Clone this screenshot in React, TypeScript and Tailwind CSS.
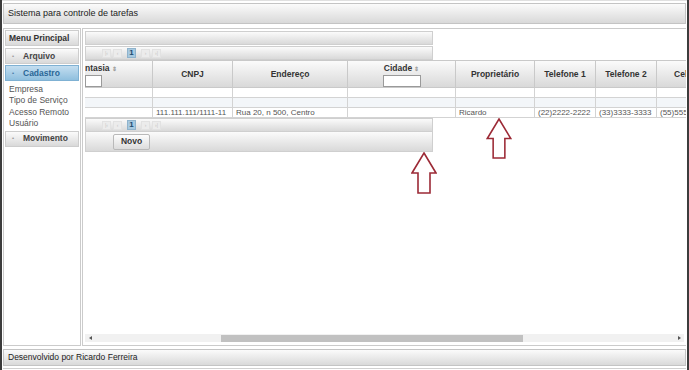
import React from "react";

const grad = "bg-linear-to-b from-[#fbfbfb] to-[#d9d9d9]";

function PagBtn({ children }: { children?: React.ReactNode }) {
  return (
    <div className="w-[9px] h-[9px] border border-[#e2e2e2] bg-[#ececec] flex items-center justify-center text-[5px] leading-none text-[#c4c4c4]">
      {children}
    </div>
  );
}

function Paginator() {
  return (
    <div className={`w-[348px] h-[14px] border border-[#cfcfcf] ${grad} flex items-center pl-[16px] gap-[2px]`}>
      <PagBtn>|‹</PagBtn>
      <PagBtn>‹</PagBtn>
      <div className="mx-[3px] w-[9px] h-[10px] border border-[#8fb3cc] bg-[#a7c9e0] flex items-center justify-center text-[8px] font-bold leading-none text-[#1e4a6e]">1</div>
      <PagBtn>›</PagBtn>
      <PagBtn>›|</PagBtn>
    </div>
  );
}

function Sort() {
  return <span className="text-[6px] text-[#999] ml-[2px] align-middle">⇕</span>;
}

const cols = [
  { w: "w-[68px]", label: "ntasia", sort: true, input: true, align: "left" },
  { w: "w-[80px]", label: "CNPJ" },
  { w: "w-[115px]", label: "Endereço" },
  { w: "w-[108px]", label: "Cidade", sort: true, input: true, align: "center" },
  { w: "w-[79px]", label: "Proprietário" },
  { w: "w-[61px]", label: "Telefone 1" },
  { w: "w-[61px]", label: "Telefone 2" },
  { w: "w-[64px]", label: "Celular" },
];

const data = ["", "111.111.111/1111-11", "Rua 20, n 500, Centro", "", "Ricardo", "(22)2222-2222", "(33)3333-3333", "(55)5555-5555"];

function HeaderCell({ c }: { c: (typeof cols)[number] }) {
  if (c.input) {
    return (
      <div className={`${c.w} shrink-0 h-full border-r border-[#c9c9c9] flex flex-col ${c.align === "left" ? "items-start" : "items-center"} pt-[2px]`}>
        <div className="font-bold text-[8.5px] leading-[10px] text-[#333] whitespace-nowrap">
          {c.label}
          <Sort />
        </div>
        <div className={`mt-[1px] h-[12px] ${c.align === "left" ? "w-[17px]" : "w-[38px]"} bg-white border border-[#9a9a9a]`} />
      </div>
    );
  }
  return (
    <div className={`${c.w} shrink-0 h-full border-r border-[#c9c9c9] flex items-center justify-center font-bold text-[8.5px] text-[#333] whitespace-nowrap`}>
      {c.label}
    </div>
  );
}

function Row({ vals, bg }: { vals: string[]; bg: string }) {
  return (
    <div className={`flex h-[10px] border-b border-[#d3d3d3] ${bg}`}>
      {cols.map((c, i) => (
        <div key={i} className={`${c.w} shrink-0 h-full border-r border-[#d3d3d3] px-[3px] text-[8px] leading-[10px] text-[#555] whitespace-nowrap overflow-hidden`}>
          {vals[i]}
        </div>
      ))}
    </div>
  );
}

function UpArrow({ className }: { className: string }) {
  return (
    <svg className={className} viewBox="0 0 26 42" fill="none">
      <path d="M13 1 L25 21 L19 21 L19 41 L7 41 L7 21 L1 21 Z" stroke="#9c2a36" strokeWidth="1.6" strokeLinejoin="miter" fill="white" />
    </svg>
  );
}

export default function App() {
  return (
    <div className="relative w-[689px] h-[370px] bg-white overflow-hidden font-['Liberation_Sans',Arial,sans-serif] text-[#333] border-l-2 border-l-[#3c3c3c] border-r-2 border-r-[#3c3c3c] flex flex-col">
      <div className="h-[3px] shrink-0 border-t border-[#e0e0e0]" />
      {/* title bar */}
      <div className={`mx-[1px] h-[21px] shrink-0 border border-[#c4c4c4] ${grad} flex items-center pl-[4px] text-[9px] text-[#222]`}>
        Sistema para controle de tarefas
      </div>

      <div className="mt-[4px] h-[318px] shrink-0 flex gap-[1px] mx-[1px]">
        {/* left menu */}
        <div className="w-[78px] shrink-0 border border-[#cbcbcb] p-[1px] flex flex-col">
          <div className={`h-[16px] border border-[#cdcdcd] ${grad} flex items-center pl-[3px] font-bold text-[8.5px] text-[#333]`}>
            Menu Principal
          </div>
          <div className={`mt-[2px] h-[16px] border border-[#cdcdcd] ${grad} flex items-center pl-[6px] text-[8.5px] font-bold text-[#444]`}>
            <span className="text-[6px] text-[#999] w-[11px]">•</span>Arquivo
          </div>
          <div className="mt-[1px] h-[16px] border border-[#7fb1d3] bg-linear-to-b from-[#c4def0] to-[#8fbfde] flex items-center pl-[6px] text-[8.5px] font-bold text-[#2a6797]">
            <span className="text-[6px] text-[#4a7ea8] w-[11px]">•</span>Cadastro
          </div>
          <div className="pl-[4px] pt-[3px] flex flex-col text-[8.5px] leading-[11.4px] text-[#555]">
            <span>Empresa</span>
            <span>Tipo de Serviço</span>
            <span>Acesso Remoto</span>
            <span>Usuário</span>
          </div>
          <div className={`mt-[1px] h-[16px] border border-[#cdcdcd] ${grad} flex items-center pl-[6px] text-[8.5px] font-bold text-[#444]`}>
            <span className="text-[6px] text-[#999] w-[11px]">•</span>Movimento
          </div>
        </div>

        {/* right content */}
        <div className="flex-1 min-w-0 border border-[#cbcbcb] border-r-0 p-[2px] pr-0 flex flex-col">
          <div className="flex-1 min-h-0 overflow-hidden flex flex-col">
            <div className={`w-[348px] h-[14px] shrink-0 border border-[#cfcfcf] ${grad}`} />
            <div className="mt-[1px]">
              <Paginator />
            </div>
            <div className="w-[640px] shrink-0">
              <div className={`flex h-[28px] border-y border-[#c9c9c9] ${grad}`}>
                {cols.map((c, i) => (
                  <HeaderCell key={i} c={c} />
                ))}
              </div>
              <Row vals={["", "", "", "", "", "", "", ""]} bg="bg-white" />
              <Row vals={["", "", "", "", "", "", "", ""]} bg="bg-[#f3f6f9]" />
              <Row vals={data} bg="bg-white" />
            </div>
            <Paginator />
            <div className={`w-[348px] h-[20px] shrink-0 border border-t-0 border-[#cfcfcf] ${grad} flex items-center pl-[27px]`}>
              <div className="h-[16px] w-[37px] border border-[#b9b9b9] rounded-[2px] bg-linear-to-b from-[#fdfdfd] to-[#dcdcdc] flex items-center justify-center font-bold text-[8.5px] text-[#333]">
                Novo
              </div>
            </div>
          </div>
          {/* horizontal scrollbar */}
          <div className="h-[8px] shrink-0 bg-[#f1f1f1] flex items-center mb-[1px] mr-[2px]">
            <div className="w-[10px] flex justify-center">
              <div className="w-0 h-0 border-y-[2.5px] border-y-transparent border-r-[3px] border-r-[#555]" />
            </div>
            <div className="ml-[126px] w-[302px] h-[7px] bg-[#c1c1c1]" />
            <div className="flex-1" />
            <div className="w-[10px] flex justify-center">
              <div className="w-0 h-0 border-y-[2.5px] border-y-transparent border-l-[3px] border-l-[#555]" />
            </div>
          </div>
        </div>
      </div>

      {/* footer */}
      <div className={`mt-[3px] mx-[1px] h-[17px] shrink-0 border border-[#c4c4c4] ${grad} flex items-center pl-[4px] text-[8.5px] text-[#222]`}>
        Desenvolvido por Ricardo Ferreira
      </div>
      <div className="mt-[2px] mx-[1px] h-[1px] bg-[#d0d0d0]" />

      <UpArrow className="absolute left-[409px] top-[152px] w-[26px] h-[42px]" />
      <UpArrow className="absolute left-[484px] top-[118px] w-[26px] h-[41px]" />
    </div>
  );
}
